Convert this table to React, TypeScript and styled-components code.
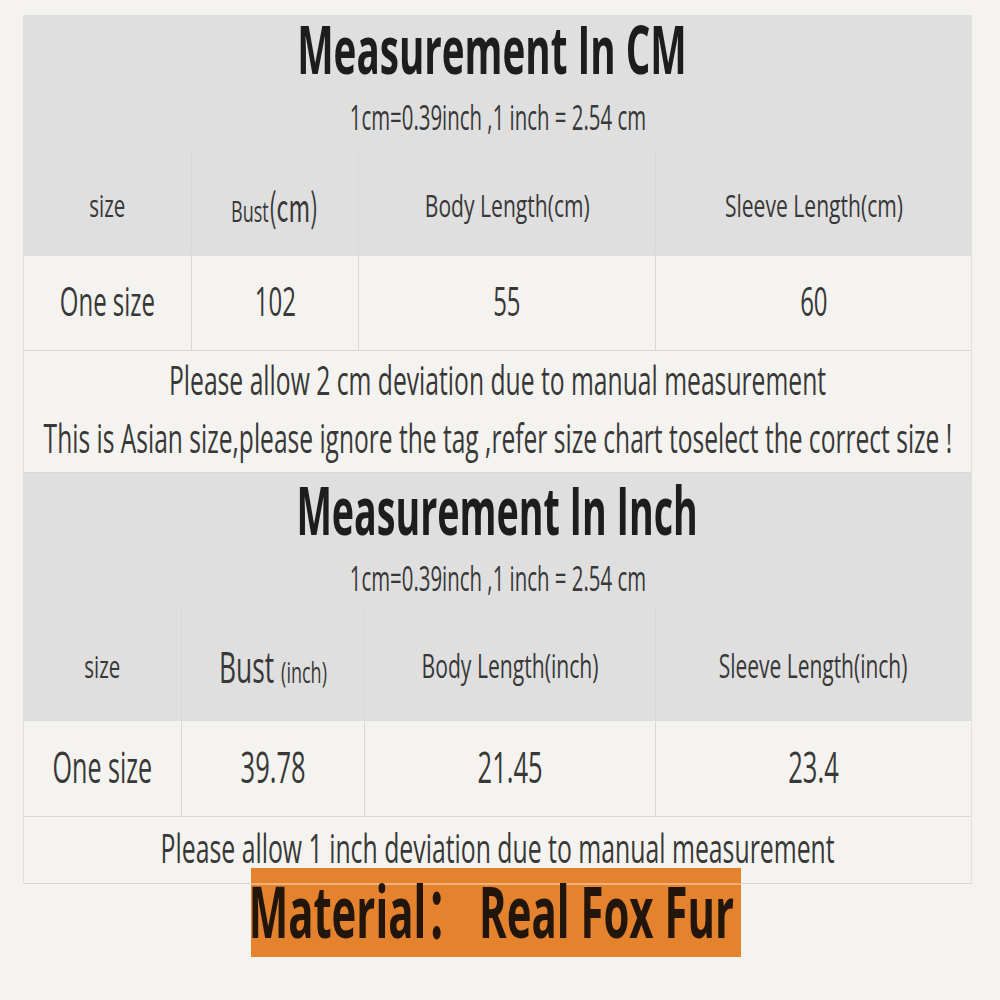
import React from 'react'
import styled, { createGlobalStyle } from 'styled-components'

const GlobalStyle = createGlobalStyle`
  html, body {
    margin: 0;
    padding: 0;
    background: #f5f3ef;
    overflow: hidden;
  }
  body {
    font-family: "Open Sans", "Liberation Sans", "Noto Sans CJK SC", sans-serif;
    color: #383838;
  }
`

const Page = styled.div`
  width: 1000px;
  height: 1000px;
  padding: 15px 28px 0 23px;
  box-sizing: border-box;
`

const Table = styled.section`
  width: 949px;
  display: flex;
  flex-direction: column;
  border-left: 1px solid #e2e0dd;
  border-right: 1px solid #e2e0dd;
  box-sizing: border-box;
`

const Head = styled.div`
  background: #dfdfdf;
  display: flex;
  flex-direction: column;
`

const Line = styled.div<{ $h: number; $right?: number }>`
  height: ${p => p.$h}px;
  padding-right: ${p => p.$right || 0}px;
  box-sizing: border-box;
  display: flex;
  justify-content: center;
  align-items: center;
  white-space: nowrap;
`

// the picture is squeezed sideways, so every text run is scaled on x
const Squeeze = styled.span<{ $size: number; $scale?: number; $bold?: boolean; $color?: string }>`
  display: inline-block;
  font-size: ${p => p.$size}px;
  font-weight: ${p => (p.$bold ? 700 : 400)};
  color: ${p => p.$color || 'inherit'};
  line-height: 1;
  margin-bottom: ${p => (p.$bold ? 8 : 5)}px;
  transform: scaleX(${p => p.$scale || 0.6});
  transform-origin: center;
`

const Small = styled.span<{ $size: number }>`
  font-size: ${p => p.$size}px;
`

const Cjk = styled.span`
  font-family: "Noto Sans CJK SC", sans-serif;
  font-size: 1.3em;
`

const Row = styled.div<{ $cols: string; $h: number; $head?: boolean }>`
  display: grid;
  grid-template-columns: ${p => p.$cols};
  height: ${p => p.$h}px;
  background: ${p => (p.$head ? '#dfdfdf' : '#f5f3ef')};
  border-bottom: 1px solid ${p => (p.$head ? '#dcdcdc' : '#dad8d5')};
  box-sizing: border-box;
`

const Cell = styled.div<{ $pad?: number; $head?: boolean }>`
  display: flex;
  justify-content: center;
  align-items: center;
  padding-top: ${p => p.$pad || 0}px;
  white-space: nowrap;
  border-left: 1px solid ${p => (p.$head ? '#d9d9d9' : '#dad8d5')};
  &:first-child {
    border-left: none;
  }
`

const Note = styled.div<{ $h: number }>`
  height: ${p => p.$h}px;
  display: flex;
  flex-direction: column;
  justify-content: center;
  border-bottom: 1px solid #dad8d5;
  box-sizing: border-box;
`

const Badge = styled.div`
  align-self: center;
  width: 490px;
  height: 89px;
  margin-top: -16px;
  margin-left: -4px;
  background: linear-gradient(
    to bottom,
    #e4822d 0,
    #e4822d 15px,
    #f0b27a 15px,
    #f0b27a 17px,
    #e4822d 17px
  );
  display: flex;
  justify-content: center;
  align-items: center;
  padding: 4px 8px 0 0;
  box-sizing: border-box;
  white-space: nowrap;
`

const Wrap = styled.div`
  display: flex;
  flex-direction: column;
  width: 949px;
`

const App = () => {
  const cmCols = '167px 167px 297px 1fr'
  const inCols = '157px 183px 291px 1fr'
  return (
    <Page>
      <GlobalStyle />
      <Wrap>
        <Table>
          <Head>
            <Line $h={74} $right={12}>
              <Squeeze $size={66} $bold $scale={0.585} $color="#1d1d1d">Measurement In CM</Squeeze>
            </Line>
            <Line $h={60}>
              <Squeeze $size={34}>1cm=0.39inch ,1 inch = 2.54 cm</Squeeze>
            </Line>
          </Head>
          <Row $cols={cmCols} $h={107} $head>
            <Cell $head $pad={12}><Squeeze $size={31} $scale={0.66}>size</Squeeze></Cell>
            <Cell $head $pad={12}><Squeeze $size={30} $scale={0.6}>Bust<Cjk>(cm)</Cjk></Squeeze></Cell>
            <Cell $head $pad={12}><Squeeze $size={31} $scale={0.68}>Body Length(cm)</Squeeze></Cell>
            <Cell $head $pad={12}><Squeeze $size={31} $scale={0.68}>Sleeve Length(cm)</Squeeze></Cell>
          </Row>
          <Row $cols={cmCols} $h={95}>
            <Cell><Squeeze $size={40}>One size</Squeeze></Cell>
            <Cell><Squeeze $size={40}>102</Squeeze></Cell>
            <Cell><Squeeze $size={40}>55</Squeeze></Cell>
            <Cell><Squeeze $size={40}>60</Squeeze></Cell>
          </Row>
          <Note $h={122}>
            <Line $h={58}>
              <Squeeze $size={40} $scale={0.617}>Please allow 2 cm deviation due to manual measurement</Squeeze>
            </Line>
            <Line $h={58}>
              <Squeeze $size={40} $scale={0.614}>This is Asian size,please ignore the tag ,refer size chart toselect the correct size !</Squeeze>
            </Line>
          </Note>
        </Table>

        <Table>
          <Head>
            <Line $h={80}>
              <Squeeze $size={66} $bold $scale={0.57} $color="#1d1d1d">Measurement In Inch</Squeeze>
            </Line>
            <Line $h={54}>
              <Squeeze $size={34}>1cm=0.39inch ,1 inch = 2.54 cm</Squeeze>
            </Line>
          </Head>
          <Row $cols={inCols} $h={114} $head>
            <Cell $head $pad={10}><Squeeze $size={31} $scale={0.66}>size</Squeeze></Cell>
            <Cell $head $pad={10}><Squeeze $size={44}>Bust <Small $size={30}>(inch)</Small></Squeeze></Cell>
            <Cell $head $pad={10}><Squeeze $size={32} $scale={0.66}>Body Length(inch)</Squeeze></Cell>
            <Cell $head $pad={10}><Squeeze $size={32} $scale={0.655}>Sleeve Length(inch)</Squeeze></Cell>
          </Row>
          <Row $cols={inCols} $h={96}>
            <Cell><Squeeze $size={44} $scale={0.57}>One size</Squeeze></Cell>
            <Cell><Squeeze $size={44} $scale={0.58}>39.78</Squeeze></Cell>
            <Cell><Squeeze $size={44} $scale={0.58}>21.45</Squeeze></Cell>
            <Cell><Squeeze $size={44} $scale={0.58}>23.4</Squeeze></Cell>
          </Row>
          <Note $h={67}>
            <Line $h={67}>
              <Squeeze $size={40} $scale={0.62}>Please allow 1 inch deviation due to manual measurement</Squeeze>
            </Line>
          </Note>
        </Table>

        <Badge>
          <Squeeze $size={71} $bold $scale={0.59} $color="#22160c">Material： Real Fox Fur</Squeeze>
        </Badge>
      </Wrap>
    </Page>
  )
}

export default App
